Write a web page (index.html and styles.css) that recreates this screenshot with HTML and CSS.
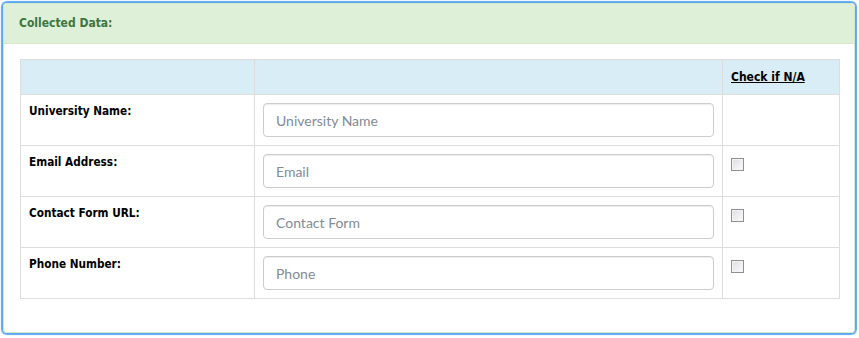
FILE: index.html
```html
<!DOCTYPE html>
<html lang="en">
<head>
  <meta charset="UTF-8" />
  <title>Collected Data</title>
  <link rel="stylesheet" href="styles.css">
</head>
<body>
  <div class="panel">
    <div class="panel-heading">Collected Data:</div>
    <div class="panel-body">
      <table class="data-table">
        <thead>
          <tr>
            <th class="col-label"></th>
            <th class="col-input"></th>
            <th class="col-na"><u>Check if N/A</u></th>
          </tr>
        </thead>
        <tbody>
          <tr>
            <td class="label">University Name:</td>
            <td><input type="text" class="field" placeholder="University Name"></td>
            <td></td>
          </tr>
          <tr>
            <td class="label">Email Address:</td>
            <td><input type="text" class="field" placeholder="Email"></td>
            <td><input type="checkbox" class="na-check"></td>
          </tr>
          <tr>
            <td class="label">Contact Form URL:</td>
            <td><input type="text" class="field" placeholder="Contact Form"></td>
            <td><input type="checkbox" class="na-check"></td>
          </tr>
          <tr>
            <td class="label">Phone Number:</td>
            <td><input type="text" class="field" placeholder="Phone"></td>
            <td><input type="checkbox" class="na-check"></td>
          </tr>
        </tbody>
      </table>
    </div>
  </div>
</body>
</html>
```

FILE: styles.css
```css
body {
  margin: 0;
  padding: 3px;
  background: #ffffff;
  font-family: "DejaVu Sans Condensed", "DejaVu Sans", sans-serif;
  font-size: 12px;
  color: #000;
}

.panel {
  width: 852px;
  height: 330px;
  box-sizing: border-box;
  border: 1px solid #d6e9c6;
  border-radius: 4px;
  box-shadow: 0 0 1px 2px #5aa7f2;
  overflow: hidden;
}

.panel-heading {
  background: #dff0d8;
  color: #3c763d;
  font-weight: bold;
  height: 39px;
  line-height: 38px;
  padding: 0 15px;
  border-bottom: 1px solid #d6e9c6;
}

.panel-body {
  padding: 15px 15px 0 16px;
}

.data-table {
  width: 820px;
  border-collapse: collapse;
  table-layout: fixed;
}

.data-table th,
.data-table td {
  border: 1px solid #dddddd;
  padding: 8px;
  vertical-align: top;
  text-align: left;
}

.data-table thead th {
  background: #d9edf7;
  height: 18px;
  line-height: 18px;
  padding: 8px;
  font-weight: bold;
}

.col-label { width: 217px; }
.col-input { width: 451px; }

.data-table tbody td {
  height: 34px;
}

.label {
  font-weight: bold;
  font-size: 11.7px;
  line-height: 16px;
}

.field {
  display: block;
  width: 100%;
  height: 34px;
  box-sizing: border-box;
  border: 1px solid #cccccc;
  border-radius: 4px;
  padding: 6px 12px;
  font-family: Lato, "Open Sans", sans-serif;
  font-size: 14px;
  color: #555;
  box-shadow: inset 0 1px 1px rgba(0, 0, 0, 0.075);
}

.field::placeholder {
  color: #7f8b97;
}

.na-check {
  appearance: none;
  -webkit-appearance: none;
  width: 13px;
  height: 13px;
  margin: 4px 0 0 0;
  border: 1px solid #8f8f8f;
  background: linear-gradient(135deg, #dcdee4, #fbfbfc);
  box-shadow: inset 0 0 0 1px #f4f4f4;
  display: block;
}
```
